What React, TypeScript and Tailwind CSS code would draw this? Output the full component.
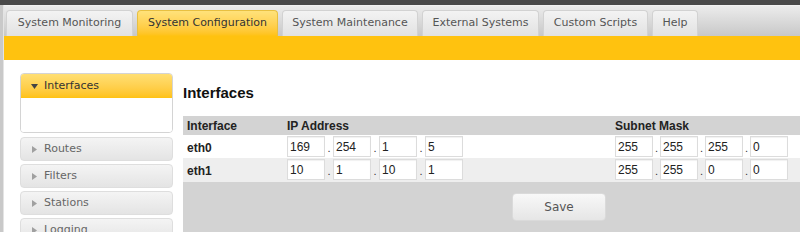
import React from 'react';

const TABS = [
  { label: 'System Monitoring', w: 'w-[127px]' },
  { label: 'System Configuration', w: 'w-[141px]', active: true },
  { label: 'System Maintenance', w: 'w-[136px]' },
  { label: 'External Systems', w: 'w-[117px]' },
  { label: 'Custom Scripts', w: 'w-[105px]' },
  { label: 'Help', w: 'w-[46px]' },
];

const ROWS = [
  { name: 'eth0', ip: ['169', '254', '1', '5'], mask: ['255', '255', '255', '0'], bg: 'bg-white', h: 'h-[23px]' },
  { name: 'eth1', ip: ['10', '1', '10', '1'], mask: ['255', '255', '0', '0'], bg: 'bg-[#eeeeee]', h: 'h-[24px]' },
];

const verdana = "font-['DejaVu_Sans',Verdana,sans-serif]";
const arial = "font-['Liberation_Sans',Arial,sans-serif]";

function Octets({ values, dot }: { values: string[]; dot: string }) {
  return (
    <div className="flex items-center">
      {values.map((v, i) => (
        <React.Fragment key={i}>
          {i > 0 && <span className={`${dot} self-end pb-[3px] text-center text-[11px] leading-none text-[#333]`}>.</span>}
          <input
            readOnly
            value={v}
            className={`${arial} h-[21px] w-[38px] border border-[#dcdcdc] bg-white pl-[2px] text-[12px] text-[#222] shadow-[inset_0_1px_1px_rgba(0,0,0,0.06)] outline-none`}
          />
        </React.Fragment>
      ))}
    </div>
  );
}

function SideItem({ label }: { label: string }) {
  return (
    <div className="flex h-[24px] shrink-0 items-center gap-[7px] rounded-[4px] border border-[#dedede] bg-gradient-to-b from-[#f4f4f4] to-[#e4e4e4] pl-[11px] text-[11px] text-[#666]">
      <svg width="5" height="7" viewBox="0 0 5 7">
        <path d="M0 0 L5 3.5 L0 7 Z" fill="#a0a0a0" />
      </svg>
      {label}
    </div>
  );
}

export default function App() {
  return (
    <div className={`${verdana} h-[232px] w-[800px] overflow-hidden bg-[#c9c9c9]`}>
      <div className="h-[5px] bg-[#4a4a4a]" />
      <div className="ml-[3px] border-l border-[#e4e4e4]">
        {/* tab strip */}
        <div className="flex h-[31px] items-end gap-[4px] border-t border-[#f2f2f2] bg-gradient-to-b from-[#ececec] to-[#c8c8c8] pl-[2px]">
          {TABS.map((t) => (
            <div
              key={t.label}
              className={`${t.w} flex h-[26px] shrink-0 items-center justify-center rounded-t-[4px] border border-b-0 text-[11px] ${
                t.active
                  ? 'border-[#e8c040] bg-gradient-to-b from-[#ffe27a] to-[#ffc20f] text-[#333]'
                  : 'border-[#d2d2d2] bg-gradient-to-b from-[#f3f3f3] to-[#e2e2e2] text-[#555]'
              }`}
            >
              {t.label}
            </div>
          ))}
        </div>
        <div className="h-[24px] bg-[#ffc20f]" />

        {/* body */}
        <div className="flex h-[172px] items-start bg-white">
          <div className="ml-[16px] mt-[13px] flex w-[153px] shrink-0 flex-col gap-[3px]">
            <div className="mb-[1px] shrink-0 overflow-hidden rounded-[4px] border border-[#d4d4d4]">
              <div className="flex h-[24px] items-center gap-[6px] bg-gradient-to-b from-[#ffdf73] to-[#ffc20f] pl-[10px] text-[11px] text-[#333]">
                <svg width="7" height="5" viewBox="0 0 7 5">
                  <path d="M0 0 L7 0 L3.5 5 Z" fill="#444" />
                </svg>
                Interfaces
              </div>
              <div className="h-[34px] bg-white" />
            </div>
            <SideItem label="Routes" />
            <SideItem label="Filters" />
            <SideItem label="Stations" />
            <SideItem label="Logging" />
          </div>

          <div className={`${arial} ml-[10px] min-w-0 flex-1`}>
            <h1 className="mt-[23px] h-[20px] text-[15px] font-bold leading-[20px] text-[#111]">Interfaces</h1>
            <div className="mt-[13px] w-[752px]">
              <div className="grid h-[19px] grid-cols-[104px_328px_1fr] items-center bg-[#d3d3d3] text-[12px] font-bold text-[#222]">
                <span className="pl-[4px]">Interface</span>
                <span>IP Address</span>
                <span>Subnet Mask</span>
              </div>
              {ROWS.map((r) => (
                <div key={r.name} className={`grid ${r.h} grid-cols-[104px_328px_1fr] items-start pt-[1px] ${r.bg}`}>
                  <span className="pl-[4px] pt-[3px] text-[12px] font-bold text-[#222]">{r.name}</span>
                  <Octets values={r.ip} dot="w-[8px]" />
                  <Octets values={r.mask} dot="w-[7px]" />
                </div>
              ))}
              <div className="h-[60px] bg-[#d3d3d3] pt-[11px]">
                <button
                  className={`${verdana} ml-[329px] h-[28px] w-[94px] rounded-[4px] border border-[#dadada] bg-gradient-to-b from-[#f8f8f8] to-[#e6e6e6] text-[12px] text-[#555]`}
                >
                  Save
                </button>
              </div>
            </div>
          </div>
        </div>
      </div>
    </div>
  );
}
